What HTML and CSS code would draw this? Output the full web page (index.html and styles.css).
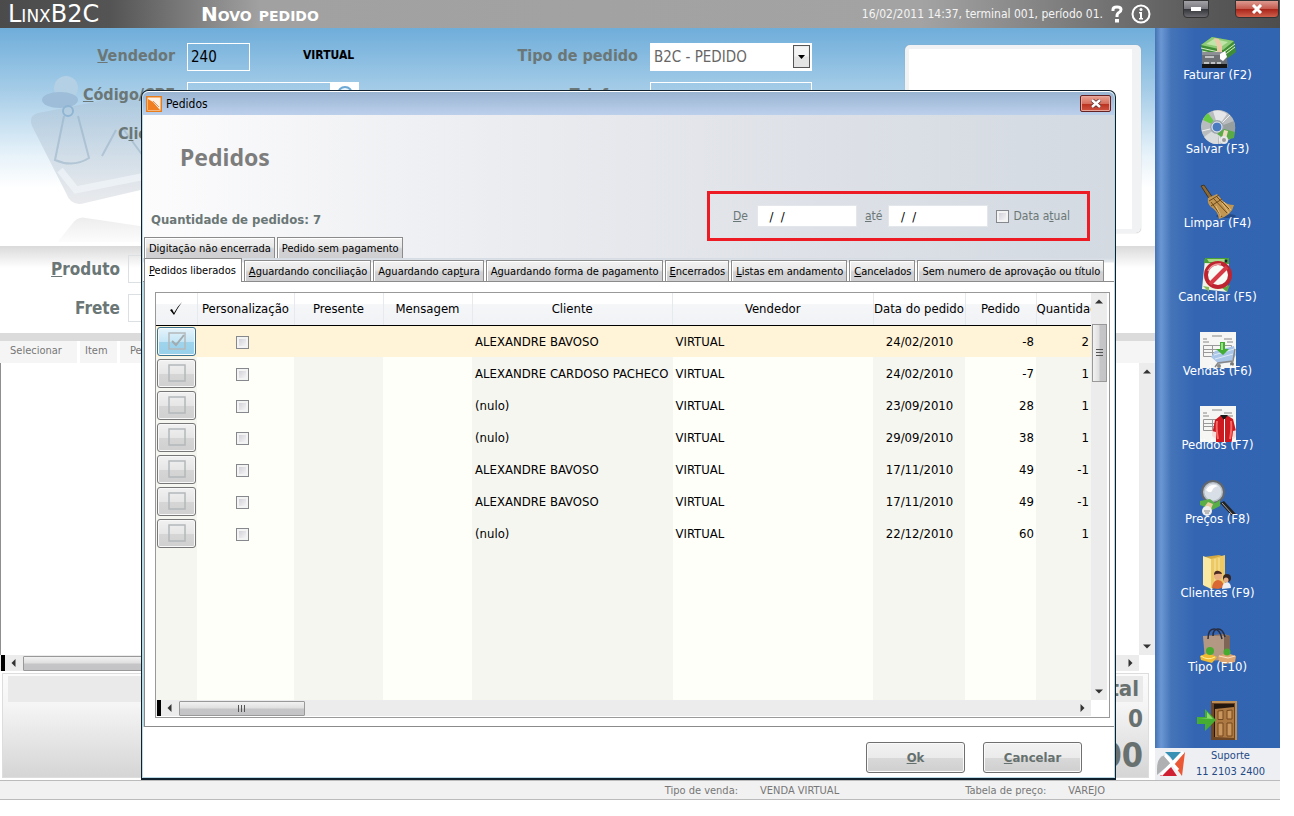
FILE: index.html
```html
<!DOCTYPE html>
<html lang="pt-BR">
<head>
    <meta charset="UTF-8">
    <meta name="viewport" content="width=device-width, initial-scale=1.0">
    <title>LinxB2C - Novo pedido</title>
    <link rel="stylesheet" href="styles.css">
</head>
<body>
    <div class="app">
        <header class="topbar">
            <span class="brand">LinxB2C</span>
            <span class="screen-name">Novo pedido</span>
            <span class="session">16/02/2011 14:37, terminal 001, período 01.</span>
            <button type="button" class="top-icon" aria-label="Ajuda">
                <svg width="12" height="18" viewBox="0 0 12 18"><path d="M2 6V4.500Q2 2 6 2t4 2.500q0 2-2 3T6 11v1" fill="none" stroke="#fff" stroke-width="3"/><rect x="4" y="14" width="4" height="3.500" fill="#fff"/></svg>
            </button>
            <button type="button" class="top-icon" aria-label="Sobre">
                <svg width="20" height="20" viewBox="0 0 20 20"><circle cx="10" cy="10" r="8.500" fill="none" stroke="#fff" stroke-width="2"/><circle cx="10" cy="5.500" r="1.500" fill="#fff"/><path d="M8 8h3v6h1v1.500H8V14h1V9.500H8z" fill="#fff"/></svg>
            </button>
            <button type="button" class="win-button minimize" aria-label="Minimizar">
                <svg width="12" height="6" viewBox="0 0 12 6"><rect x="1" y="1" width="10" height="4" fill="#fff"/></svg>
            </button>
            <button type="button" class="win-button close" aria-label="Fechar">
                <svg width="12" height="10" viewBox="0 0 12 10"><path d="M2 1l8 8M10 1L2 9" stroke="#fff" stroke-width="3"/></svg>
            </button>
        </header>

        <div class="workspace">
            <main class="order">
                <section class="order-head">
                    <svg class="watermark" width="150" height="170" viewBox="0 0 150 170">
                        <defs>
                            <linearGradient id="wm" x1="0" y1="0" x2="0" y2="1"><stop offset="0" stop-color="#a9c4da"/><stop offset="1" stop-color="#dfe1e5"/></linearGradient>
                            <linearGradient id="wm2" x1="0" y1="0" x2="0" y2="1"><stop offset="0" stop-color="#ededee"/><stop offset="1" stop-color="#fff"/></linearGradient>
                        </defs>
                        <path d="M4 42q-4-10 6-13l92-18q14-2 19 8l30 62v16l-94 22q-14 4-19-10z" transform="translate(0 12)" fill="url(#wm)" opacity=".7"/>
                        <circle cx="38" cy="16" r="12" fill="#b3d0e5"/>
                        <ellipse cx="32" cy="28" rx="18" ry="8" fill="#9dbdd8"/>
                        <circle cx="40" cy="40" r="5" transform="translate(0 -1)" fill="none" stroke="#8fb5d3" stroke-width="2"/>
                        <path d="M36 44L27 88q18 8 34-2L50 44M88 58L74 84M96 58l22 30" fill="none" stroke="#8fabc2" stroke-width="2" opacity=".5"/>
                        <path d="M32 98l16 20 100-20" fill="none" stroke="#f4f8fb" stroke-width="7" opacity=".6"/>
                        <path d="M28 172l16-20q6-8 14-6l94 14v14z" fill="url(#wm2)"/>
                    </svg>
                    <div class="form">
                        <div class="form-row">
                            <label class="field-label" for="vendedor"><u>V</u>endedor</label>
                            <input class="field short" id="vendedor" type="text" value="240">
                            <span class="seller-name">VIRTUAL</span>
                            <label class="field-label second" for="tipo">Tipo de pedido</label>
                            <div class="select-box">
                                <select id="tipo"><option>B2C - PEDIDO</option></select>
                                <svg class="select-arrow" width="17" height="23" viewBox="0 0 17 23"><rect x=".5" y=".5" width="16" height="22" fill="#e4e4e4" stroke="#555"/><rect x="1.500" y="1.500" width="14" height="10" fill="#f4f4f4"/><path d="M5 10h7l-3.500 4z" fill="#000"/></svg>
                            </div>
                        </div>
                        <div class="form-row">
                            <label class="field-label" for="codigo"><u>C</u>ódigo/CPF</label>
                            <input class="field code" id="codigo" type="text">
                            <button type="button" class="lookup" aria-label="Buscar"><svg width="18" height="18" viewBox="0 0 18 18"><circle cx="9" cy="9" r="7" fill="#eaf4fb" stroke="#6da9d4" stroke-width="2"/></svg></button>
                            <label class="field-label second" for="telefone">Telefone</label>
                            <input class="field phone" id="telefone" type="text">
                        </div>
                        <div class="form-row">
                            <label class="field-label" for="cliente">C<u>l</u>iente</label>
                            <input class="field phone" id="cliente" type="text">
                        </div>
                    </div>
                    <div class="photo"></div>
                </section>

                <section class="product">
                    <div class="form-row">
                        <label class="product-label" for="produto"><u>P</u>roduto</label>
                        <input class="product-field" id="produto" type="text">
                    </div>
                    <div class="form-row">
                        <label class="product-label" for="frete">Frete</label>
                        <input class="product-field" id="frete" type="text">
                    </div>
                </section>

                <section class="items">
                    <div class="items-head"><span>Selecionar</span><span>Item</span><span>Pedido</span></div>
                    <div class="items-body">
                        <div class="items-canvas"></div>
                        <div class="vscroll">
                            <svg width="8" height="5" viewBox="0 0 8 5"><path d="M0 4.500h8L4 .5z" fill="#333"/></svg>
                            <svg width="8" height="5" viewBox="0 0 8 5"><path d="M0 .5h8L4 4.500z" fill="#333"/></svg>
                        </div>
                    </div>
                    <div class="hscroll items-scroll">
                        <span class="split"></span>
                        <svg width="5" height="8" viewBox="0 0 5 8"><path d="M4.500 0v8L.5 4z" fill="#333"/></svg>
                        <span class="hthumb items-thumb"></span>
                        <svg class="push" width="5" height="8" viewBox="0 0 5 8"><path d="M.5 0v8l4-4z" fill="#333"/></svg>
                    </div>
                </section>

                <section class="totals">
                    <div class="totals-head">Total</div>
                    <div class="totals-count">0</div>
                    <div class="totals-value">0,00</div>
                </section>
            </main>

            <nav class="sidebar">
                <button type="button" class="action">
                    <svg width="36" height="36" viewBox="0 0 36 36">
                        <path d="M1 9L12 1l22 4 2 11-12 9-21-7z" fill="#3f8e35"/>
                        <path d="M1 9L12 1l22 4-11 9z" fill="#8ecb77"/>
                        <path d="M6 8l8-5 14 3-7 5z" fill="#bfe5a8"/>
                        <path d="M1 12l22 5 12-9M2 15l21 5 12-9" fill="none" stroke="#d5efc6"/>
                        <path d="M14 2l5 1 3 7v10l-5-1V10z" fill="#ecc9a9"/>
                        <path d="M2 16h24l2 15H2z" fill="#6d7074"/><path d="M2 16h24v3H2z" fill="#8c9094"/>
                        <path d="M5 21h9M4 27h5M11 27h4M17 27h4" stroke="#dcdcdc" stroke-width="1.500"/>
                        <path d="M2 28h25v4H2z" fill="#151515"/><path d="M20 18l5-3 2 6-4 4-3-2z" fill="#fff"/>
                    </svg>
                    <span>Faturar (F2)</span>
                </button>
                <button type="button" class="action">
                    <svg width="36" height="36" viewBox="0 0 36 36">
                        <circle cx="18" cy="17" r="17" fill="#b9bcbe"/>
                        <path d="M18 17L8 3Q4 6 3 10z" fill="#66ca44"/><path d="M18 17L13 1q8-2 14 3z" fill="#e4e6e7"/>
                        <path d="M18 17l16-6q3 8-1 15z" fill="#98a09f"/><path d="M18 17L4 27q6 8 14 7z" fill="#d9dcdd"/>
                        <path d="M18 17l12-12M18 17L2 21M18 17l2 17" stroke="#eff0f0"/>
                        <circle cx="17" cy="17" r="7" fill="#9ca6ae"/><circle cx="17" cy="17" r="5" fill="#4a7ac0" stroke="#eee"/>
                        <path d="M17 24l7-5 11 3-1 6-8 2z" fill="#5aab46"/><path d="M24 20l4 1-2 8-4-1z" fill="#efdbc4"/>
                        <circle cx="24" cy="30" r="4" fill="#e8e8e8"/><circle cx="24" cy="30" r="2" fill="#999"/>
                    </svg>
                    <span>Salvar (F3)</span>
                </button>
                <button type="button" class="action">
                    <svg width="36" height="36" viewBox="0 0 36 36">
                        <ellipse cx="26" cy="32" rx="10" ry="2" fill="#244b88"/>
                        <path d="M1 2l3-1 9 13-3 2z" fill="#8c6a35" stroke="#44331d"/>
                        <path d="M8 14l9-4 6 7q4 4 11 4-2 10-15 14-1-8-8-12-4-3-3-9z" fill="#c19652"/>
                        <path d="M9 17l10-6M11 22l11-7M13 14l14 15M17 13l12 12M11 18l11 15" fill="none" stroke="#6c4a1c"/>
                        <path d="M22 19l7 10M24 18l7 8M16 22l5 10" stroke="#e3c07f"/>
                    </svg>
                    <span>Limpar (F4)</span>
                </button>
                <button type="button" class="action">
                    <svg width="36" height="36" viewBox="0 0 36 36">
                        <path d="M5 1l24 2-2 31-25-3z" fill="#eef3e6"/><path d="M5 0h24v6L4 5z" fill="#4aa034"/>
                        <path d="M7 1h17l4 3H9z" fill="#a7db89"/><circle cx="26" cy="3" r="1.500" fill="#123"/>
                        <path d="M3 28l6 1v5z" fill="#87bd59"/><path d="M22 30l8-3-3 7z" fill="#5daa45"/>
                        <circle cx="18" cy="17" r="12" fill="#fff" opacity=".6"/>
                        <circle cx="18" cy="17" r="12" fill="none" stroke="#bd2430" stroke-width="4"/>
                        <path d="M10 26L27 9" stroke="#d63a44" stroke-width="4"/><path d="M8 13q4-8 13-7" fill="none" stroke="#ef9ca0" stroke-width="1.500"/>
                    </svg>
                    <span>Cancelar (F5)</span>
                </button>
                <button type="button" class="action">
                    <svg width="36" height="36" viewBox="0 0 36 36">
                        <rect width="36" height="36" fill="#f6f6f4"/>
                        <path d="M12 4h10M3 7h4M24 7h8M3 10h6M27 10h6" stroke="#888"/>
                        <path d="M3.500 13.500h28v11h-28zM3 17.500h28M3 20.500h28M12.500 13v11M22.500 13v11" fill="none" stroke="#999"/>
                        <path d="M11 25l4-6 19-5 2 9-5 7-12 2z" fill="#a9c5e8"/><path d="M14 23l20-6M15 27l18-5" stroke="#dfeaf6"/>
                        <path d="M20 10h5v7h4l-6 6-7-6h4z" fill="#43ad35"/><path d="M21 11h2v7h-2z" fill="#9be186"/>
                        <path d="M15 35l3-4 15-2 2-12" fill="none" stroke="#888" stroke-width="1.500"/><circle cx="19" cy="34" r="2" fill="#888"/><circle cx="32" cy="32" r="2" fill="#777"/>
                    </svg>
                    <span>Vendas (F6)</span>
                </button>
                <button type="button" class="action">
                    <svg width="36" height="36" viewBox="0 0 36 36">
                        <rect width="36" height="36" fill="#f6f6f4"/>
                        <path d="M12 4h10M3 7h4M24 7h8M3 10h6M27 10h6" stroke="#888"/>
                        <path d="M3.500 13.500h28v11h-28zM3 17.500h28M3 20.500h28M12.500 13v11" fill="none" stroke="#999"/>
                        <path d="M20 10h8l5 3 4 16-5 2v5H16v-5l-4-2 3-15z" fill="#cd1920"/>
                        <path d="M17 15q-1 8 1 18M31 15q1 8-1 18" fill="none" stroke="#f36a66" stroke-width="2"/>
                        <path d="M20 9h8l-4 5z" fill="#191919"/><path d="M24.500 13v23" stroke="#fff"/>
                        <path d="M12 25l4 1v7l-4-3zM33 25l4-1v6l-5 4z" fill="#f8dedb"/>
                    </svg>
                    <span>Pedidos (F7)</span>
                </button>
                <button type="button" class="action">
                    <svg width="36" height="36" viewBox="0 0 36 36">
                        <path d="M20 23l4-2 12 13-4 2z" fill="#242424"/><path d="M22 23l10 11" stroke="#a8a8a8"/>
                        <circle cx="13" cy="12" r="11" fill="#b7bfc7" stroke="#62676d" stroke-width="2"/>
                        <circle cx="13" cy="12" r="8.500" fill="#d9dfe6"/><path d="M6 10q4-7 12-4-5 1-6 5-2 3-6-1z" fill="#fff"/>
                        <path d="M0 21l10-2 5 4 5-3v6l-8 4-12-5z" fill="#59ae48"/><path d="M8 22l5 2-2 5-6-3z" fill="#e8cba1"/><circle cx="7" cy="31" r="5" fill="#eee"/><path d="M4 31h6M5 33h4" stroke="#888"/>
                    </svg>
                    <span>Preços (F8)</span>
                </button>
                <button type="button" class="action">
                    <svg width="36" height="36" viewBox="0 0 36 36">
                        <path d="M4 3l15-2 6 2v29l-9 2-12-2z" fill="#d2a943"/><path d="M3 2l8 3v30l-8-4z" fill="#f9e9a2"/>
                        <path d="M11 5l14-4v29l-14 5z" fill="#ecc965"/><path d="M15 5v26M19 4v26" stroke="#f9e7a0"/>
                        <path d="M12 34q1-8 6-8t6 7l-6 2z" fill="#d96833"/><circle cx="18" cy="22" r="4" fill="#e8ad81"/><path d="M14 21q0-5 5-4 3 1 3 3-5-1-8 1z" fill="#4d2a24"/>
                        <path d="M22 35q0-6 5-7 4 1 4 6z" fill="#eeeef4"/><circle cx="27" cy="24" r="4" fill="#332525"/><circle cx="26" cy="26" r="2.500" fill="#e3ac88"/>
                    </svg>
                    <span>Clientes (F9)</span>
                </button>
                <button type="button" class="action">
                    <svg width="36" height="36" viewBox="0 0 36 36">
                        <path d="M3 8l21-2 6 2v22l-23 3z" fill="#9a7d69"/><path d="M3 8h21v24L5 33z" fill="#b39883"/><path d="M24 7l6 1v22l-6 2z" fill="#7f6555"/>
                        <path d="M8 11Q8 1 14 1t8 10M13 8Q13 1 18 1t7 8" fill="none" stroke="#282c3f" stroke-width="1.500"/>
                        <path d="M0 28l8-3 9 4-5 6-11-3z" fill="#f0b932"/><path d="M1 28q7 5 14 1" fill="none" stroke="#fff1a1"/>
                        <circle cx="10" cy="23" r="4" fill="#48ab2f"/>
                        <path d="M18 28l9-3 9 3-1 6-10 2-6-3z" fill="#dda572"/><path d="M19 28l9 2 7-2" fill="none" stroke="#fae0c3"/><circle cx="27" cy="24" r="3.500" fill="#48ab2f"/>
                    </svg>
                    <span>Tipo (F10)</span>
                </button>
                <button type="button" class="action" aria-label="Sair">
                    <svg width="42" height="42" viewBox="0 0 42 42">
                        <path d="M14 1h26v39H14z" fill="#6d4725"/><path d="M17 4h20v33H17z" fill="#24180e"/>
                        <path d="M39 2v38M15 2h25" stroke="#bc8e58" stroke-width="2"/>
                        <path d="M18 9l19-2v31l-19-1z" fill="#ad7841"/>
                        <path d="M21 11l5-.5v9h-5zM30 10.500l5-.5v9h-5zM21 23h5v13h-5zM30 23h5v13h-5z" fill="#c9965e" stroke="#75491f"/>
                        <path d="M0 17h8V9l11 11L8 31v-7H0z" fill="#45ae32"/><path d="M1 18h9v-6l6 7z" fill="#8cdb68"/>
                    </svg>
                </button>
                <div class="support">
                    <svg width="30" height="28" viewBox="0 0 30 28">
                        <path d="M9 2h18l-9 10q-3-5-9-10z" fill="#3791b5"/><path d="M1 19q0-12 8-14l6 8-14 12z" fill="#aeb0b2"/>
                        <path d="M29 2l-3 24-8-11z" fill="#eb5835"/><path d="M4 26l11-9 6 9z" fill="#cf2034"/><path d="M9 5l13 15M27 2L5 25" stroke="#fff" stroke-width="3"/>
                    </svg>
                    <div class="support-text">Suporte<br>11 2103 2400</div>
                </div>
            </nav>
        </div>

        <footer class="statusbar">
            <span>Tipo de venda:</span><span class="status-value">VENDA VIRTUAL</span>
            <span class="price-table">Tabela de preço:</span><span class="status-value">VAREJO</span>
        </footer>

        <div class="dialog" role="dialog" aria-labelledby="dialog-title">
            <div class="dialog-bar">
                <svg width="16" height="16" viewBox="0 0 16 16"><rect width="16" height="16" fill="#e87d1c"/><rect x="1.500" y="1.500" width="13" height="13" fill="#fff2e2"/><path d="M2 3l5 3 7 8H2z" fill="#f07f22"/><path d="M7 5l6 6" stroke="#d79b74"/></svg>
                <span class="dialog-name">Pedidos</span>
                <button type="button" class="dialog-close" aria-label="Fechar janela">
                    <svg width="12" height="9" viewBox="0 0 12 9"><path d="M2 1l8 7M10 1L2 8" stroke="#5c2a2a" stroke-width="4"/><path d="M2 1l8 7M10 1L2 8" stroke="#fff" stroke-width="2.500"/></svg>
                </button>
            </div>
            <div class="dialog-head">
                <h1 id="dialog-title">Pedidos</h1>
                <div class="summary">
                    <strong class="quantity">Quantidade de pedidos: 7</strong>
                    <div class="filter">
                        <label for="de"><u>D</u>e</label>
                        <input class="date" id="de" type="text" value="  /  /">
                        <label for="ate"><u>a</u>té</label>
                        <input class="date" id="ate" type="text" value="  /  /">
                        <input class="check" id="atual" type="checkbox">
                        <label for="atual">Data a<u>t</u>ual</label>
                    </div>
                </div>
                <div class="tabs upper">
                    <button type="button" class="tab">Digitação não encerrada</button>
                    <button type="button" class="tab">Pedido sem pagamento</button>
                </div>
            </div>
            <div class="tabs lower">
                <button type="button" class="tab active"><u>P</u>edidos liberados</button>
                <button type="button" class="tab"><u>A</u>guardando conciliação</button>
                <button type="button" class="tab">Aguardando cap<u>t</u>ura</button>
                <button type="button" class="tab">A<u>g</u>uardando forma de pagamento</button>
                <button type="button" class="tab"><u>E</u>ncerrados</button>
                <button type="button" class="tab"><u>L</u>istas em andamento</button>
                <button type="button" class="tab"><u>C</u>ancelados</button>
                <button type="button" class="tab">Sem numero de aprovação ou título</button>
            </div>
            <div class="tab-panel">
                <div class="grid">
                    <div class="grid-main">
                        <div class="grid-view">
                            <table>
                                <colgroup>
                                    <col class="c-mark"><col class="c-custom"><col class="c-gift"><col class="c-gift"><col class="c-name"><col class="c-name"><col class="c-date"><col class="c-order"><col class="c-qty">
                                </colgroup>
                                <thead>
                                    <tr>
                                        <th aria-label="Marcar"><svg width="14" height="14" viewBox="0 0 14 14"><path d="M1 8l2-1 2 4Q8 5 13 0 8 7 5 13z" fill="#000"/></svg></th>
                                        <th>Personalização</th><th>Presente</th><th>Mensagem</th><th>Cliente</th><th>Vendedor</th><th>Data do pedido</th><th>Pedido</th><th class="cut">Quantidade</th>
                                    </tr>
                                </thead>
                                <tbody id="orders"></tbody>
                            </table>
                        </div>
                        <div class="vscroll">
                            <svg width="8" height="5" viewBox="0 0 8 5"><path d="M0 4.500h8L4 .5z" fill="#333"/></svg>
                            <span class="vthumb"><svg width="7" height="8" viewBox="0 0 7 8"><path d="M0 .5h7M0 3.500h7M0 6.500h7" stroke="#555"/></svg></span>
                            <svg class="push-down" width="8" height="5" viewBox="0 0 8 5"><path d="M0 .5h8L4 4.500z" fill="#333"/></svg>
                        </div>
                    </div>
                    <div class="hscroll">
                        <span class="split"></span>
                        <svg width="5" height="8" viewBox="0 0 5 8"><path d="M4.500 0v8L.5 4z" fill="#333"/></svg>
                        <span class="hthumb"><svg width="8" height="7" viewBox="0 0 8 7"><path d="M.5 0v7M3.500 0v7M6.500 0v7" stroke="#555"/></svg></span>
                        <svg class="push" width="5" height="8" viewBox="0 0 5 8"><path d="M.5 0v8l4-4z" fill="#333"/></svg>
                    </div>
                </div>
            </div>
            <div class="dialog-foot">
                <button type="button" class="big-button"><u>O</u>k</button>
                <button type="button" class="big-button"><u>C</u>ancelar</button>
            </div>
        </div>
    </div>

    <script>
        const orders = [
            ['ALEXANDRE BAVOSO', '24/02/2010', -8, 2],
            ['ALEXANDRE CARDOSO PACHECO', '24/02/2010', -7, 1],
            ['(nulo)', '23/09/2010', 28, 1],
            ['(nulo)', '29/09/2010', 38, 1],
            ['ALEXANDRE BAVOSO', '17/11/2010', 49, -1],
            ['ALEXANDRE BAVOSO', '17/11/2010', 49, -1],
            ['(nulo)', '22/12/2010', 60, 1]
        ];

        let rows = '';
        orders.forEach((o, i) => {
            const tick = i === 0 ? '<path d="M4 9l4 4 8-10" fill="none" stroke="#a3abaf" stroke-width="2"/>' : '';
            rows += `
                <tr class="${i === 0 ? 'selected' : ''}">
                    <td class="mark"><button type="button" class="toggle ${i === 0 ? 'on' : ''}" aria-label="Selecionar pedido ${i + 1}">
                        <svg width="18" height="18" viewBox="0 0 18 18"><rect x="1" y="1" width="16" height="16" fill="none" stroke="#b4b8ba" stroke-width="1.500"/>${tick}</svg>
                    </button></td>
                    <td class="center check-cell"><input class="check" type="checkbox" aria-label="Personalização do pedido ${i + 1}"></td>
                    <td></td><td></td>
                    <td>${o[0]}</td><td>VIRTUAL</td>
                    <td class="center">${o[1]}</td>
                    <td class="number">${o[2]}</td><td class="number">${o[3]}</td>
                </tr>`;
        });
        // empty row that carries the column stripes down to the scrollbar
        rows += '<tr class="filler">' + '<td></td>'.repeat(9) + '</tr>';
        document.getElementById('orders').innerHTML = rows;
    </script>
</body>
</html>
```

FILE: styles.css
```css
* {
    box-sizing: border-box;
}
body {
    margin: 0;
    padding: 0 14px 16px 0;
    background-color: #fff;
    font-family: "DejaVu Sans Condensed", "DejaVu Sans", sans-serif;
    font-size: 12px;
    color: #000;
}
button, input, select {
    font-family: inherit;
    font-size: inherit;
    border-radius: 0;
}
button {
    padding: 0;
    cursor: pointer;
}
svg {
    display: block;
    flex: none;
}
.app {
    position: relative;
    display: flex;
    flex-direction: column;
    min-height: calc(100vh - 16px);
}

/* top bar */
.topbar {
    display: flex;
    align-items: center;
    height: 28px;
    padding-left: 8px;
    background: linear-gradient(to right, #4b4b4b 0, #545454 110px, #a1a1a1 260px, #a3a3a3 72%, #595959 94%, #4d4d4d 100%);
    color: #fff;
}
.brand, .screen-name {
    font-family: "DejaVu Sans", sans-serif;
    font-variant: small-caps;
    line-height: 28px;
    white-space: nowrap;
}
.brand {
    width: 193px;
    font-size: 24px;
}
.screen-name {
    font-size: 20px;
    font-weight: bold;
}
.session {
    margin-left: auto;
    margin-right: 8px;
    color: #f4f4f4;
}
.top-icon {
    border: 0;
    background: none;
    margin-right: 8px;
}
.win-button {
    display: flex;
    align-items: center;
    justify-content: center;
    align-self: flex-start;
    height: 18px;
    border: 1px solid #333;
    border-radius: 0 0 4px 4px;
}
.minimize {
    width: 26px;
    margin-left: 24px;
    background: linear-gradient(#a2a2a6, #77777d 50%, #33333b 50%, #69696f);
}
.close {
    width: 44px;
    margin: 0 1px 0 26px;
    background: linear-gradient(#dd9a90, #c5584c 50%, #a82318 50%, #cf604c);
}

/* order screen behind the dialog */
.workspace {
    flex: 1;
    display: flex;
}
.order {
    flex: 1;
    min-width: 0;
    display: flex;
    flex-direction: column;
}
.order-head {
    position: relative;
    display: flex;
    height: 218px;
    padding: 15px 14px 0 0;
    background: linear-gradient(#6fadda 0, #a3cbe7 60px, #e5f1f9 125px, #fff 160px);
}
.watermark {
    position: absolute;
    left: 28px;
    top: 44px;
}
.form {
    position: relative;
    flex: 1;
    display: flex;
    flex-direction: column;
    gap: 11px;
}
.form-row {
    display: flex;
    align-items: center;
    height: 28px;
}
.field-label, .product-label {
    color: #6b7776;
    font-weight: bold;
    text-align: right;
}
.field-label {
    width: 175px;
    margin-right: 12px;
    padding-bottom: 3px;
    font-size: 16px;
}
.field {
    height: 28px;
    border: 1px solid #fff;
    background: transparent;
    padding: 0 3px;
    font-size: 15px;
}
.short {
    width: 63px;
}
.code {
    width: 144px;
}
.phone {
    width: 162px;
}
.lookup {
    width: 28px;
    height: 28px;
    border: 0;
    background: #fff;
    padding: 3px 5px;
}
.lookup svg {
    margin-bottom: 4px;
}
.seller-name {
    width: 109px;
    padding: 0 0 4px 53px;
    font-weight: bold;
}
.second {
    margin-left: auto;
}
.form-row .phone:last-child, .select-box {
    margin-right: 93px;
}
.select-box {
    position: relative;
    width: 162px;
}
.select-box select {
    width: 100%;
    height: 28px;
    appearance: none;
    border: 0;
    background: #fff;
    padding: 0 4px;
    font-size: 15px;
    color: #666;
}
.select-arrow {
    position: absolute;
    right: 2px;
    top: 2px;
    pointer-events: none;
}
.photo {
    width: 236px;
    height: 188px;
    margin-top: 2px;
    border: 4px solid #f1f2f3;
    border-right-width: 9px;
    border-radius: 5px;
    background: #fff;
    box-shadow: 0 0 1px #999;
}
.product {
    display: flex;
    flex-direction: column;
    gap: 11px;
    height: 95px;
    padding-top: 9px;
    border-bottom: 8px solid #dbdbdb;
    background: linear-gradient(#dadada, #fff 22px);
}
.product-label {
    width: 120px;
    margin-right: 8px;
    font-size: 17px;
}
.product-field {
    width: 90px;
    height: 28px;
    border: 1px solid #dde0e2;
    background: transparent;
}
.items {
    flex: 1;
    display: flex;
    flex-direction: column;
}
.items-head {
    display: flex;
    height: 22px;
    background: #f5f5f5;
    color: #777;
    font-size: 11px;
    line-height: 20px;
}
.items-head span {
    padding: 0 10px;
    border-right: 3px solid #fff;
}
.items-head span:first-child {
    width: 80px;
}
.items-head span:nth-child(2) {
    width: 40px;
    padding: 0 5px;
}
.items-body {
    flex: 1;
    display: flex;
    border-left: 1px solid #8f8f8f;
}
.items-canvas {
    flex: 1;
}
.vscroll {
    display: flex;
    flex-direction: column;
    align-items: center;
    justify-content: space-between;
    width: 16px;
    padding: 6px 0;
    background: #ececec;
}
.hscroll {
    display: flex;
    align-items: center;
    height: 16px;
    margin-right: 16px;
    background: #ececec;
}
.split {
    width: 4px;
    height: 16px;
    margin: 0 6px 0 1px;
    background: #000;
}
.hthumb {
    display: flex;
    align-items: center;
    justify-content: center;
    width: 126px;
    height: 15px;
    margin-left: 7px;
    border: 1px solid #999;
    border-radius: 1px;
    background: linear-gradient(#f2f2f2, #e0e0e0 45%, #c5c5c8 55%, #c4c4c7);
}
.items-thumb {
    width: 50%;
}
.push {
    margin-left: auto;
    margin-right: 6px;
}
.totals {
    height: 105px;
    margin: 2px 6px 2px 2px;
    padding: 2px 5px 0;
    border: 1px solid #ddd;
    background: linear-gradient(#fbfbfb 0, #f5f5f5 30%, #d5d5d5 100%);
    color: #68716f;
    font-weight: bold;
    text-align: right;
}
.totals-head {
    height: 26px;
    padding-right: 4px;
    background: #eaeaea;
    font-size: 22px;
    line-height: 26px;
}
.totals-count {
    font-size: 24px;
    line-height: 34px;
}
.totals-value {
    font-size: 34px;
    line-height: 38px;
}

/* action bar on the right */
.sidebar {
    display: flex;
    flex-direction: column;
    width: 125px;
    background: linear-gradient(to right, #4472b3 0, #6b98d4 6px, #4574b8 16px, #3365b2 40px, #3265b1 100%);
}
.action {
    display: flex;
    flex-direction: column;
    align-items: center;
    height: 74px;
    padding-top: 8px;
    border: 0;
    background: none;
    color: #fff;
    font-size: 13px;
    line-height: 18px;
}
.action svg {
    margin-bottom: -6px;
}
.action span {
    position: relative;
}
.action:nth-child(10) {
    height: 54px;
    padding-top: 6px;
}
.support {
    display: flex;
    align-items: center;
    height: 32px;
    margin-top: auto;
    padding: 0 5px 0 1px;
    background: #eeeff3;
    color: #244a86;
}
.support-text {
    flex: 1;
    font-size: 11px;
    line-height: 16px;
    text-align: center;
}
.statusbar {
    display: flex;
    align-items: center;
    justify-content: flex-end;
    height: 20px;
    padding-right: 175px;
    border-top: 1px solid #bbb;
    border-bottom: 1px solid #bbb;
    background: #f1f1f1;
    color: #777;
    font-size: 11px;
}
.status-value {
    margin-left: 22px;
}
.price-table {
    margin-left: 126px;
}

/* orders dialog */
.dialog {
    position: absolute;
    left: 141px;
    right: 164px;
    top: 90px;
    bottom: 20px;
    display: flex;
    flex-direction: column;
    padding: 0 1px 1px;
    border: 1px solid #10202c;
    border-bottom-width: 2px;
    border-radius: 7px 7px 0 0;
    background: #b8d8e4;
}
.dialog-bar {
    display: flex;
    align-items: center;
    height: 24px;
    padding: 0 3px;
    border-top: 1px solid #fff;
    border-radius: 6px 6px 0 0;
    background: linear-gradient(#99b4d1, #bcd0ec);
}
.dialog-name {
    margin-left: 4px;
}
.dialog-close {
    display: flex;
    align-items: center;
    justify-content: center;
    width: 31px;
    height: 17px;
    margin-left: auto;
    border: 1px solid #622;
    border-radius: 2px;
    background: linear-gradient(#eba394, #d5705f 50%, #b7301d 50%, #cf5442);
    box-shadow: inset 0 0 0 1px #e8a79c;
}
.dialog-head {
    display: flex;
    flex-direction: column;
    height: 143px;
    background: linear-gradient(to right, #fcfcfd, #eff0f3 28%, #dee1e7 68%, #d3dae2);
}
h1 {
    margin: 24px 0 0 37px;
    color: #7d7d7d;
    font-family: "Noto Sans", sans-serif;
    font-size: 23px;
    line-height: 36px;
}
.summary {
    display: flex;
    justify-content: space-between;
    margin-top: 16px;
    padding: 0 24px 0 8px;
    color: #6b7776;
}
.quantity {
    margin-top: 20px;
    font-size: 13px;
    line-height: 17px;
}
.filter {
    display: flex;
    align-items: center;
    height: 50px;
    padding: 0 17px 0 23px;
    border: 3px solid #ed1c24;
}
.date {
    width: 100px;
    height: 22px;
    margin: 0 8px 0 9px;
    padding: 0 4px;
    border: 1px solid #e3e6ea;
    background: #fff;
    font-size: 13px;
    white-space: pre;
}
.filter .date + label + .date {
    margin-left: 6px;
}
.check {
    appearance: none;
    width: 13px;
    height: 13px;
    margin: 0;
    border: 1px solid #85888c;
    background: linear-gradient(135deg, #c7c7d0, #fff);
    box-shadow: inset 0 0 0 2px #f3f3f3;
    vertical-align: middle;
}
.filter .check {
    margin-right: 4px;
}
.tabs {
    display: flex;
    gap: 2px;
    padding-left: 1px;
}
.upper {
    margin-top: -4px;
    height: 21px;
}
.lower {
    align-items: flex-end;
    height: 24px;
    background: linear-gradient(#d5dbe3 0, #e4e8ed 4px, #fff 5px);
    border-bottom: 1px solid #8b8b8b;
}
.tab {
    height: 21px;
    padding: 0 3px 0 4px;
    border: 1px solid #8b8b8b;
    border-bottom: 0;
    background: linear-gradient(#f3f3f3, #e8e8e8 45%, #d2d2d4 55%, #cfcfd1);
    box-shadow: inset 1px 1px 0 #fff;
    font-size: 11px;
    white-space: nowrap;
}
.active {
    height: 24px;
    margin-bottom: -1px;
    padding-right: 5px;
    background: #fff;
}
.tab-panel {
    flex: 1;
    display: flex;
    padding: 10px 4px 8px 10px;
    border: solid #8b8b8b;
    border-width: 0 0 1px 1px;
    margin-left: 1px;
    background: #fff;
}
.grid {
    flex: 1;
    min-width: 0;
    display: flex;
    flex-direction: column;
    border: 1px solid #999;
}
.grid-main {
    flex: 1;
    display: flex;
}
.grid-view {
    flex: 1;
    min-width: 0;
    display: flex;
    overflow: hidden;
}
.grid-main .vscroll {
    margin-right: 2px;
    justify-content: flex-start;
}
.vthumb {
    display: flex;
    align-items: center;
    justify-content: center;
    width: 15px;
    height: 58px;
    margin-top: 20px;
    border: 1px solid #999;
    background: linear-gradient(to right, #f2f2f2, #e0e0e0 45%, #c5c5c8 55%, #c4c4c7);
}
.push-down {
    margin-top: auto;
}
.grid .hscroll {
    margin: 0 18px 1px 0;
}
table {
    width: 100%;
    height: 100%;
    table-layout: fixed;
    border-collapse: collapse;
    font-size: 13px;
}
.c-mark { width: 41px; }
.c-custom { width: 97px; }
.c-gift { width: 89px; }
.c-date { width: 92px; }
.c-order { width: 71px; }
.c-qty { width: 55px; }
th {
    height: 32px;
    padding: 0;
    border-right: 1px solid #e6e9ee;
    border-bottom: 1px solid #000;
    background: linear-gradient(#fff 35%, #f5f6f8 36%, #f1f2f5);
    font-weight: normal;
    white-space: nowrap;
}
th svg {
    margin: 0 auto;
}
.cut {
    overflow: hidden;
    border-right: 0;
}
td {
    height: 32px;
    padding: 0 2px 0 3px;
    background: #fffffa;
    white-space: nowrap;
}
td:nth-child(odd) {
    background: #f6f6f0;
}
.selected td, .selected td:nth-child(odd) {
    background: #fff3d8;
}
.filler td {
    height: auto;
}
td.mark {
    padding: 0 1px;
}
.center {
    text-align: center;
}
.check-cell {
    padding-right: 9px;
}
.number {
    text-align: right;
}
.toggle {
    display: flex;
    align-items: center;
    justify-content: center;
    width: 39px;
    height: 29px;
    border: 1px solid #777;
    border-radius: 3px;
    background: linear-gradient(#f1f1f1, #e6e6e6 50%, #d6d6d6 51%, #d0d0d0);
    box-shadow: inset 0 0 0 1px #f8f8f8;
}
.on {
    border-color: #3a7291;
    background: linear-gradient(#e5f4fb, #c5e6f6 50%, #9fd4ec 51%, #98d0ea);
}
.dialog-foot {
    display: flex;
    gap: 18px;
    justify-content: flex-end;
    padding: 15px 32px 4px 0;
    background: #fff;
}
.big-button {
    width: 99px;
    height: 31px;
    border: 1px solid #707070;
    border-radius: 3px;
    background: linear-gradient(#f2f2f2, #ebebeb 50%, #d9d9d9 51%, #cfcfcf);
    box-shadow: inset 0 0 0 1px #fafafa;
    color: #66716f;
    font-size: 13px;
    font-weight: bold;
}
```
